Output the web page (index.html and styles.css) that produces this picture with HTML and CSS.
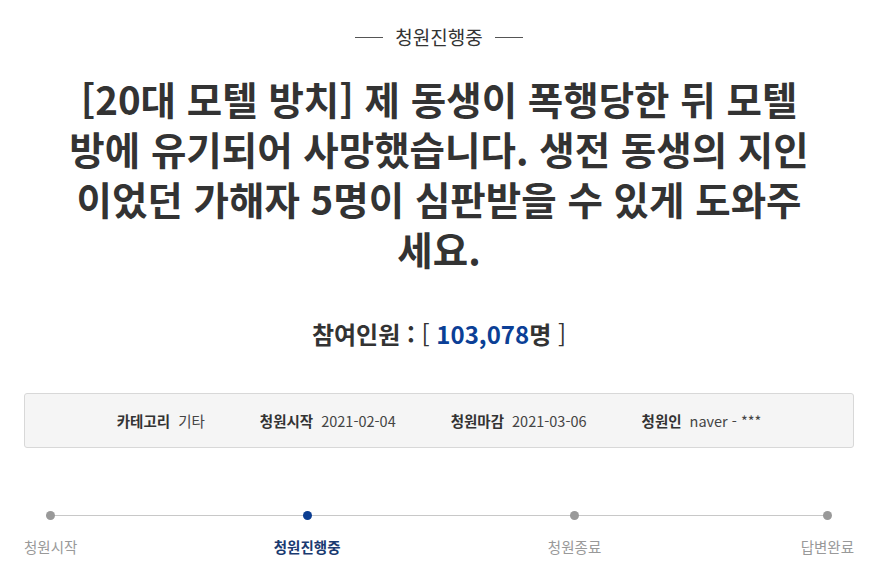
FILE: index.html
```html
<!DOCTYPE html>
<html lang="ko">
<head>
<meta charset="utf-8">
<title>청원진행중</title>
<link rel="stylesheet" href="styles.css">
</head>
<body>
<div class="page">
  <div class="status"><span class="status-line"></span><span class="status-text">청원진행중</span><span class="status-line"></span></div>
  <h1 class="title">[20대 모텔 방치] 제 동생이 폭행당한 뒤 모텔 방에 유기되어 사망했습니다. 생전 동생의 지인 이었던 가해자 5명이 심판받을 수 있게 도와주세요.</h1>
  <div class="count"><span class="count-label">참여인원 :</span> <span class="bracket">[</span> <span class="count-num">103,078</span><span class="count-unit">명</span> <span class="bracket">]</span></div>
  <div class="info">
    <div class="info-item"><span class="info-label">카테고리</span><span class="info-value">기타</span></div>
    <div class="info-item"><span class="info-label">청원시작</span><span class="info-value">2021-02-04</span></div>
    <div class="info-item"><span class="info-label">청원마감</span><span class="info-value">2021-03-06</span></div>
    <div class="info-item"><span class="info-label">청원인</span><span class="info-value">naver - ***</span></div>
  </div>
  <ol class="steps">
    <li class="step"><span class="dot"></span><span class="step-label">청원시작</span></li>
    <li class="step step-active"><span class="dot"></span><span class="step-label">청원진행중</span></li>
    <li class="step step-end"><span class="dot"></span><span class="step-label">청원종료</span></li>
    <li class="step"><span class="dot"></span><span class="step-label">답변완료</span></li>
  </ol>
</div>
</body>
</html>
```
FILE: styles.css
```css
* { box-sizing: border-box; }
html, body { margin: 0; padding: 0; background: #fff; }
body {
  font-family: "Noto Sans CJK KR", "Noto Sans", sans-serif;
  color: #333;
}
.page {
  width: 830px;
  margin: 0 auto;
  padding-top: 24px;
}
.status {
  display: flex;
  justify-content: center;
  align-items: center;
  gap: 12px;
  height: 26px;
}
.status-line {
  width: 28px;
  height: 1px;
  background: #555;
}
.status-text {
  font-size: 19px;
  line-height: 26px;
  color: #333;
}
.title {
  width: 750px;
  margin: 23px auto 0;
  font-size: 38.5px;
  line-height: 50px;
  font-weight: 700;
  text-align: center;
  color: #333;
  word-break: normal;
}
.count {
  margin-top: 44px;
  text-align: center;
  font-size: 24px;
  line-height: 34px;
  color: #333;
}
.count-label, .count-unit { font-weight: 700; }
.count-num { font-weight: 700; color: #0b3f96; }
.bracket { font-weight: 400; }
.info {
  margin-top: 42px;
  height: 55px;
  background: #f5f5f5;
  border: 1px solid #d8d8d8;
  border-radius: 3px;
  display: flex;
  justify-content: center;
  align-items: center;
  gap: 55px;
  font-size: 14.5px;
}
.info-item { display: flex; gap: 8px; }
.info-label { font-weight: 700; color: #333; }
.info-value { color: #444; }
.steps {
  position: relative;
  list-style: none;
  margin: 63px 0 0;
  padding: 0;
  display: flex;
  justify-content: space-between;
}
.steps::before {
  content: "";
  position: absolute;
  top: 4px;
  left: 27px;
  right: 28px;
  height: 1px;
  background: #c8c8c8;
}
.step {
  display: flex;
  flex-direction: column;
  align-items: center;
}
.step-active { margin-right: 11px; }
.step-end { margin-right: 3px; }
.dot {
  position: relative;
  width: 9px;
  height: 9px;
  border-radius: 50%;
  background: #999;
}
.step-label {
  margin-top: 17px;
  font-size: 14.5px;
  line-height: 20px;
  color: #999;
}
.step-active .dot { background: #0b3d91; }
.step-active .step-label { color: #1a3a70; font-weight: 700; }
```
